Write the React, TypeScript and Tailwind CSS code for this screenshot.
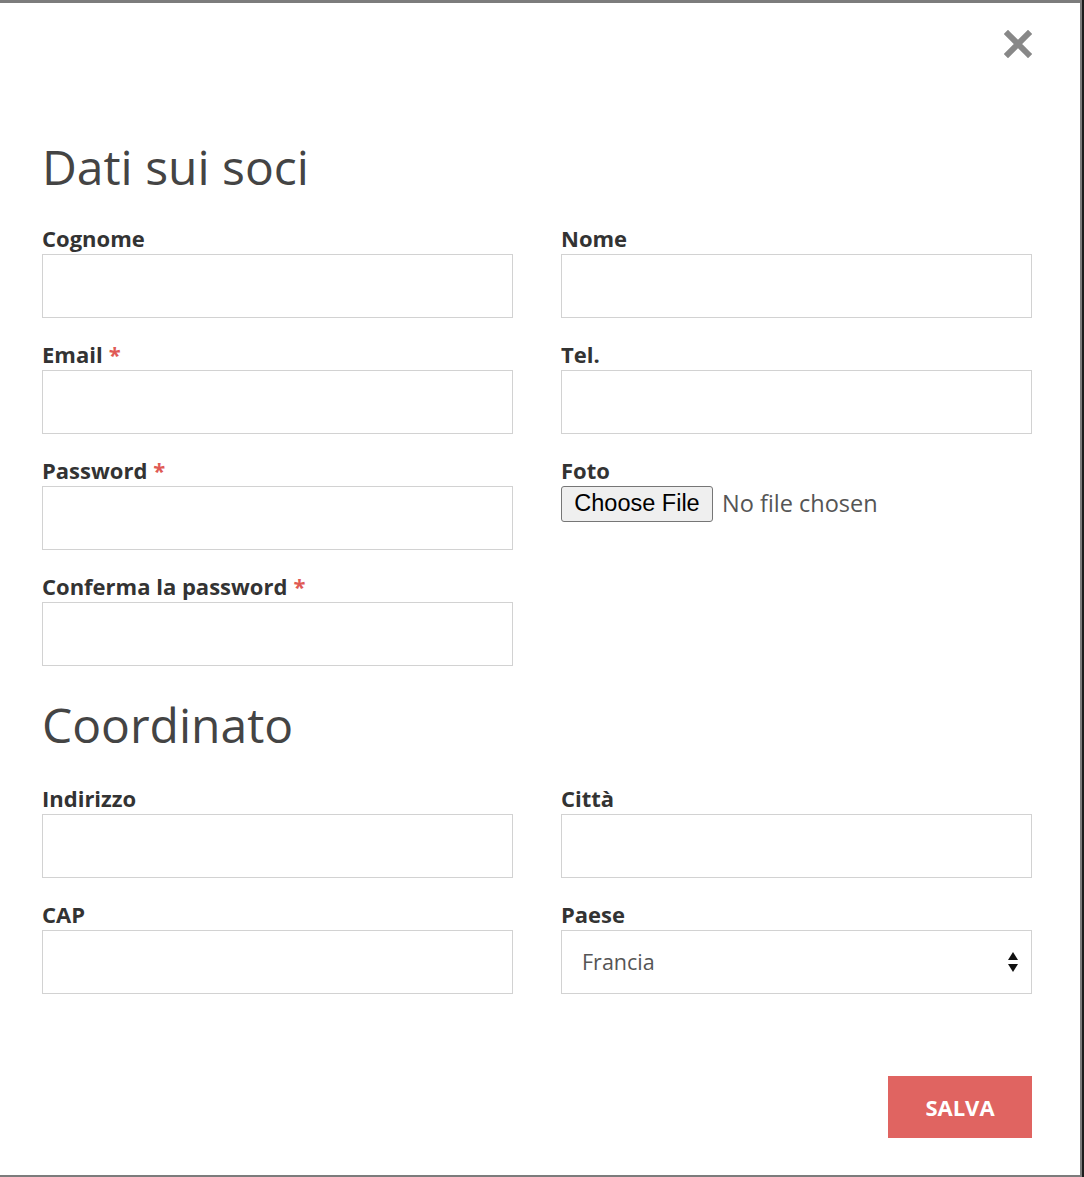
import { useState } from 'react';

type Field = {
  name: string;
  label: string;
  required?: boolean;
  type?: string;
};

const paesi = ['Francia', 'Italia', 'Belgio', 'Svizzera', 'Spagna'];

function CloseIcon() {
  return (
    <svg width="28" height="28" viewBox="0 0 28 28" aria-hidden="true">
      <path d="M4 4 L24 24 M24 4 L4 24" stroke="#888888" strokeWidth="6" strokeLinecap="square" />
    </svg>
  );
}

function Label({ text, required }: { text: string; required?: boolean }) {
  return (
    <label className="mb-[4px] block text-[22px] font-bold leading-[24px] text-[#333]">
      {text}
      {required && <span className="ml-[6px] text-[#e05a55]">*</span>}
    </label>
  );
}

function TextField({ field }: { field: Field }) {
  return (
    <div>
      <Label text={field.label} required={field.required} />
      <input
        type={field.type || 'text'}
        name={field.name}
        className="block h-[64px] w-full border border-[#d2d2d2] bg-white px-[20px] text-[21px] text-[#555] outline-none focus:border-[#999]"
      />
    </div>
  );
}

export default function App() {
  const [paese, setPaese] = useState('Francia');

  return (
    <div className="flex h-[1177px] w-[1084px] items-start bg-[#1c1c1c] font-['Open_Sans',sans-serif]">
      <div className="flex h-[1177px] w-[1082px] flex-col border-t-[3px] border-r-2 border-b-2 border-[#7c7c7c] bg-white pl-[42px] pr-[48px]">
        <div className="flex justify-end pt-[27px]">
          <button type="button" aria-label="Chiudi" className="h-[28px] w-[28px]">
            <CloseIcon />
          </button>
        </div>

        <h2 className="mt-[80px] text-[48px] font-normal leading-[57.6px] text-[#444]">Dati sui soci</h2>

        <div className="mt-[30px] grid grid-cols-2 gap-x-[48px] gap-y-[24px]">
          <TextField field={{ name: 'cognome', label: 'Cognome' }} />
          <TextField field={{ name: 'nome', label: 'Nome' }} />
          <TextField field={{ name: 'email', label: 'Email', required: true, type: 'email' }} />
          <TextField field={{ name: 'tel', label: 'Tel.', type: 'tel' }} />
          <TextField field={{ name: 'password', label: 'Password', required: true, type: 'password' }} />
          <div>
            <Label text="Foto" />
            <div className="mt-[2px] flex h-[36px] items-center">
              <span className="flex h-[36px] w-[152px] items-center justify-center rounded-[3px] border border-[#767676] bg-[#efefef] font-['Liberation_Sans',Arial,sans-serif] text-[23.5px] text-black">
                Choose File
              </span>
              <span className="ml-[9px] text-[23.5px] text-[#555]">No file chosen</span>
            </div>
          </div>
          <TextField field={{ name: 'conferma', label: 'Conferma la password', required: true, type: 'password' }} />
        </div>

        <h2 className="mt-[30px] text-[48px] font-normal leading-[57.6px] text-[#444]">Coordinato</h2>

        <div className="mt-[33px] grid grid-cols-2 gap-x-[48px] gap-y-[24px]">
          <TextField field={{ name: 'indirizzo', label: 'Indirizzo' }} />
          <TextField field={{ name: 'citta', label: 'Città' }} />
          <TextField field={{ name: 'cap', label: 'CAP' }} />
          <div>
            <Label text="Paese" />
            <div className="relative">
              <select
                value={paese}
                onChange={(e) => setPaese(e.target.value)}
                className="block h-[64px] w-full appearance-none border border-[#d2d2d2] bg-white pl-[20px] text-[21.5px] text-[#555] outline-none"
              >
                {paesi.map((p) => (
                  <option key={p}>{p}</option>
                ))}
              </select>
              <svg
                className="pointer-events-none absolute right-[14px] top-[21px]"
                width="10"
                height="22"
                viewBox="0 0 10 22"
                aria-hidden="true"
              >
                <path d="M5 1 L10 9 L0 9 Z M0 13 L10 13 L5 21 Z" fill="#111" />
              </svg>
            </div>
          </div>
        </div>

        <div className="mt-[82px] flex justify-end">
          <button
            type="button"
            className="h-[62px] w-[144px] bg-[#e06461] text-[22px] font-bold uppercase text-white"
          >
            Salva
          </button>
        </div>
      </div>
    </div>
  );
}
